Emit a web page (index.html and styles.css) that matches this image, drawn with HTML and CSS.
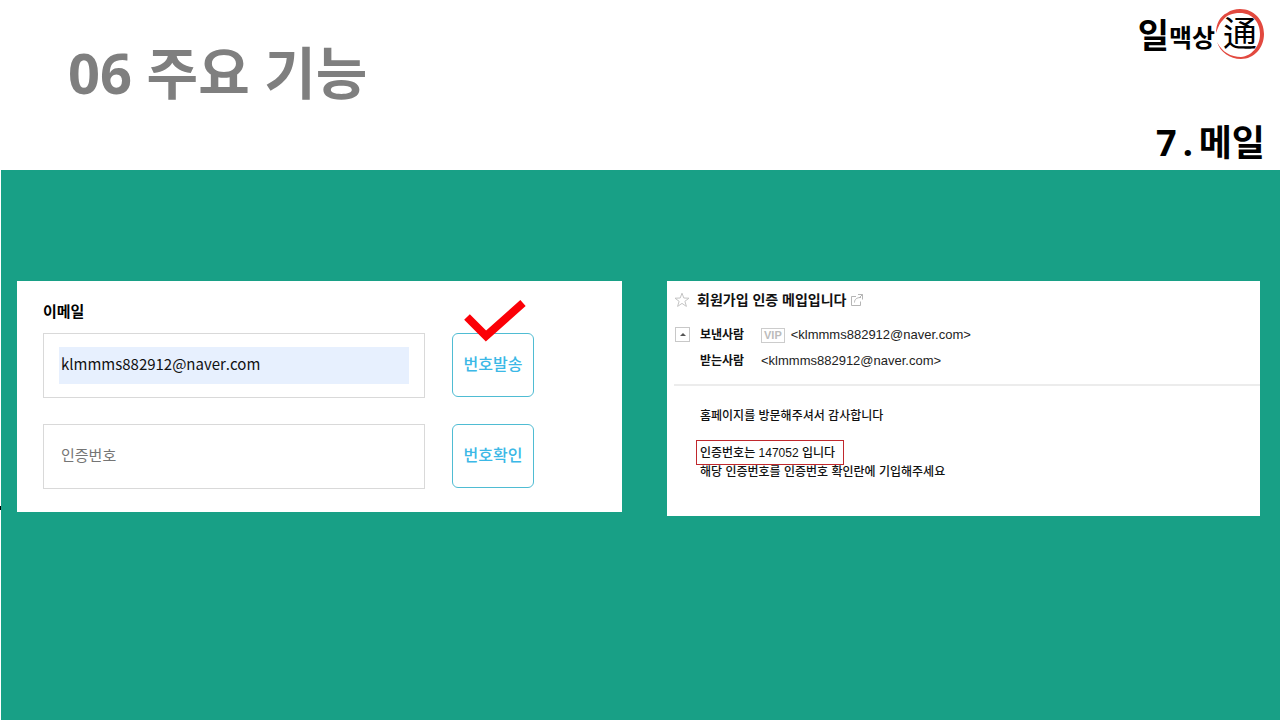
FILE: index.html
```html
<!doctype html>
<html lang="ko">
<head>
    <title>일맥상통 - 주요 기능</title>
    <meta charset="utf-8">
    <link rel="stylesheet" href="styles.css">
</head>
<body>
    <header class="header">
        <h1>06 주요 기능</h1>
        <div class="side">
            <div class="logo">
                <span class="logo-big">일</span><span class="logo-small">맥상</span>
                <span class="seal">
                    <svg viewBox="0 0 50 50" fill="#e2493f">
                        <path d="M1 24 C1 15 5 7 12 4 C16 1 20 0 25 0 C39 0 49 11 49 25 C49 39 39 50 26 50 C15 50 5 43 2 33 C7 43 16 48 26 48 C37 47 45 37 45 25 C45 13 37 4 25 4 C17 4 12 6 8 11 C4 15 3 19 1 24Z"/>
                    </svg>
                    <span>通</span>
                </span>
            </div>
            <h2><span>7</span> <span>.</span> <span>메일</span></h2>
        </div>
    </header>

    <main class="stage">
        <form class="panel verify">
            <label class="title" for="email">이메일</label>
            <div class="field"><input class="filled" id="email" type="text" value="klmmms882912@naver.com"></div>
            <div class="action">
                <button type="button">번호발송</button>
                <svg class="check" viewBox="0 0 62 43"><path d="M3 18 L22 37 L59 4" fill="none" stroke="#fb0007" stroke-width="8"/></svg>
            </div>
            <div class="field"><input type="text" placeholder="인증번호" aria-label="인증번호"></div>
            <div class="action"><button type="button">번호확인</button></div>
        </form>

        <article class="panel mail">
            <div class="subject">
                <svg width="16" height="16" viewBox="0 0 16 16" fill="none" stroke="#c4c4c4"><path d="M8 1.2 L9.8 6 L15 6.2 L10.9 9.3 L12.4 14.4 L8 11.4 L3.6 14.4 L5.1 9.3 L1 6.2 L6.2 6Z"/></svg>
                <h3>회원가입 인증 메입입니다</h3>
                <svg class="popup" width="12" height="12" viewBox="0 0 12 12" fill="none" stroke="#b5b5b5"><path d="M5 2.5 H.5 V11.5 H9.5 V7.5 M3.5 8.5 C3.5 5 6 3.5 10 3.5 M7 .5 H11.5 V5.5 M11.5 .5 L8 4"/></svg>
            </div>
            <div class="people">
                <button class="fold" type="button" aria-label="접기"></button>
                <dl>
                    <dt>보낸사람</dt>
                    <dd><span class="vip">VIP</span>&lt;klmmms882912@naver.com&gt;</dd>
                    <dt>받는사람</dt>
                    <dd>&lt;klmmms882912@naver.com&gt;</dd>
                </dl>
            </div>
            <div class="body">
                <p>홈페이지를 방문해주셔서 감사합니다</p>
                <p class="code">인증번호는 147052 입니다</p>
                <p>해당 인증번호를 인증번호 확인란에 기입해주세요</p>
            </div>
        </article>
    </main>
</body>
</html>
```

FILE: styles.css
```css
* {
    box-sizing: border-box;
}

body {
    margin: 0;
    min-height: 100vh;
    display: flex;
    flex-direction: column;
    background: #fff;
    color: #000;
    font-family: 'Noto Sans', 'Noto Sans CJK KR', sans-serif;
}

h1, h2, h3, p, dl, dd {
    margin: 0;
}

.header {
    display: flex;
    justify-content: space-between;
    height: 170px;
    padding: 9px 15px 0 68px;
}

h1 {
    margin-top: 21px;
    font-size: 56px;
    line-height: 84px;
    color: #7f7f7f;
}

.side {
    display: flex;
    flex-direction: column;
    align-items: flex-end;
    justify-content: space-between;
}

h2 {
    display: flex;
    align-items: baseline;
    gap: 6px;
    font-size: 36px;
    line-height: 54px;
}

/* logo */
.logo {
    display: flex;
    align-items: center;
    font-family: 'Noto Sans CJK KR', sans-serif;
    font-weight: 700;
    line-height: 44px;
}

.logo-big {
    font-size: 34px;
}

.logo-small {
    font-size: 25px;
    padding-top: 4px;
}

.seal {
    position: relative;
    width: 50px;
    height: 50px;
    font-size: 34px;
    font-weight: 400;
    line-height: 46px;
    text-align: center;
}

.seal svg {
    position: absolute;
    inset: 0;
}

.seal span {
    position: relative;
}

/* green area with the two screens */
.stage {
    position: relative;
    flex: 1;
    display: grid;
    grid-template-columns: 605fr 593fr;
    gap: 45px;
    align-items: start;
    margin-left: 1px;
    padding: 111px 20px 40px 16px;
    background: #18a086;
}

.stage::before {
    content: '';
    position: absolute;
    top: 336px;
    left: -1px;
    width: 1px;
    height: 4px;
    background: #000;
}

.panel {
    background: #fff;
}

.verify {
    display: grid;
    grid-template-columns: 1fr 82px;
    column-gap: 27px;
    row-gap: 26px;
    padding: 18px 88px 23px 26px;
    font-family: 'Noto Sans CJK KR', sans-serif;
}

.title {
    grid-column: 1 / -1;
    margin-bottom: -15px;
    font-size: 15px;
    line-height: 23px;
    font-weight: 700;
}

.field {
    height: 65px;
    padding: 13px 15px;
    border: 1px solid #d9d9d9;
}

.field input {
    display: block;
    width: 100%;
    height: 37px;
    padding: 0 2px 5px;
    border: 0;
    background: none;
    color: #111;
    font-family: inherit;
    font-size: 15px;
}

.field .filled {
    background: #e7f0fe;
}

.field input::placeholder {
    color: #757575;
    opacity: 1;
}

.action {
    position: relative;
}

.action button {
    display: block;
    width: 100%;
    height: 64px;
    padding: 0 0 4px;
    border: 1px solid #4fbcd3;
    border-radius: 6px;
    background: #fff;
    color: #3bb8e6;
    font-family: inherit;
    font-size: 16px;
    font-weight: 500;
}

.check {
    position: absolute;
    top: -34px;
    left: 12px;
    width: 62px;
    height: 43px;
}

/* mail preview */
.mail {
    padding: 7px 0 35px 7px;
    font-family: 'Liberation Sans', 'Noto Sans CJK KR', sans-serif;
    font-size: 12px;
    color: #222;
}

.subject {
    display: flex;
    align-items: center;
    gap: 7px;
    height: 24px;
}

h3 {
    font-size: 14px;
    line-height: 24px;
    color: #111;
}

.popup {
    margin-left: -2px;
}

.people {
    display: flex;
    gap: 10px;
    padding: 10px 0 10px 1px;
    border-bottom: 2px solid #ececec;
}

.fold {
    display: grid;
    place-items: center;
    width: 15px;
    height: 15px;
    margin-top: 5px;
    padding: 0;
    border: 1px solid #c8c8c8;
    background: #fff;
}

.fold::before {
    content: '';
    border: 3px solid transparent;
    border-top: 0;
    border-bottom-color: #555;
}

dl {
    display: grid;
    grid-template-columns: 61px auto;
    line-height: 26px;
}

dt {
    font-weight: 700;
    color: #111;
}

dd {
    display: flex;
    align-items: center;
    font-size: 13px;
}

.vip {
    margin-right: 6px;
    padding: 0 2px;
    border: 1px solid #ccc;
    color: #bbb;
    font-size: 11px;
    font-weight: 700;
    line-height: 13px;
}

.body {
    padding: 21px 0 0 26px;
    font-weight: 500;
    line-height: 18px;
    color: #111;
}

.body .code {
    width: fit-content;
    margin: 15px 0 -2px -4px;
    padding: 3px 8px 2px 3px;
    border: 1px solid #c0282d;
}
```
